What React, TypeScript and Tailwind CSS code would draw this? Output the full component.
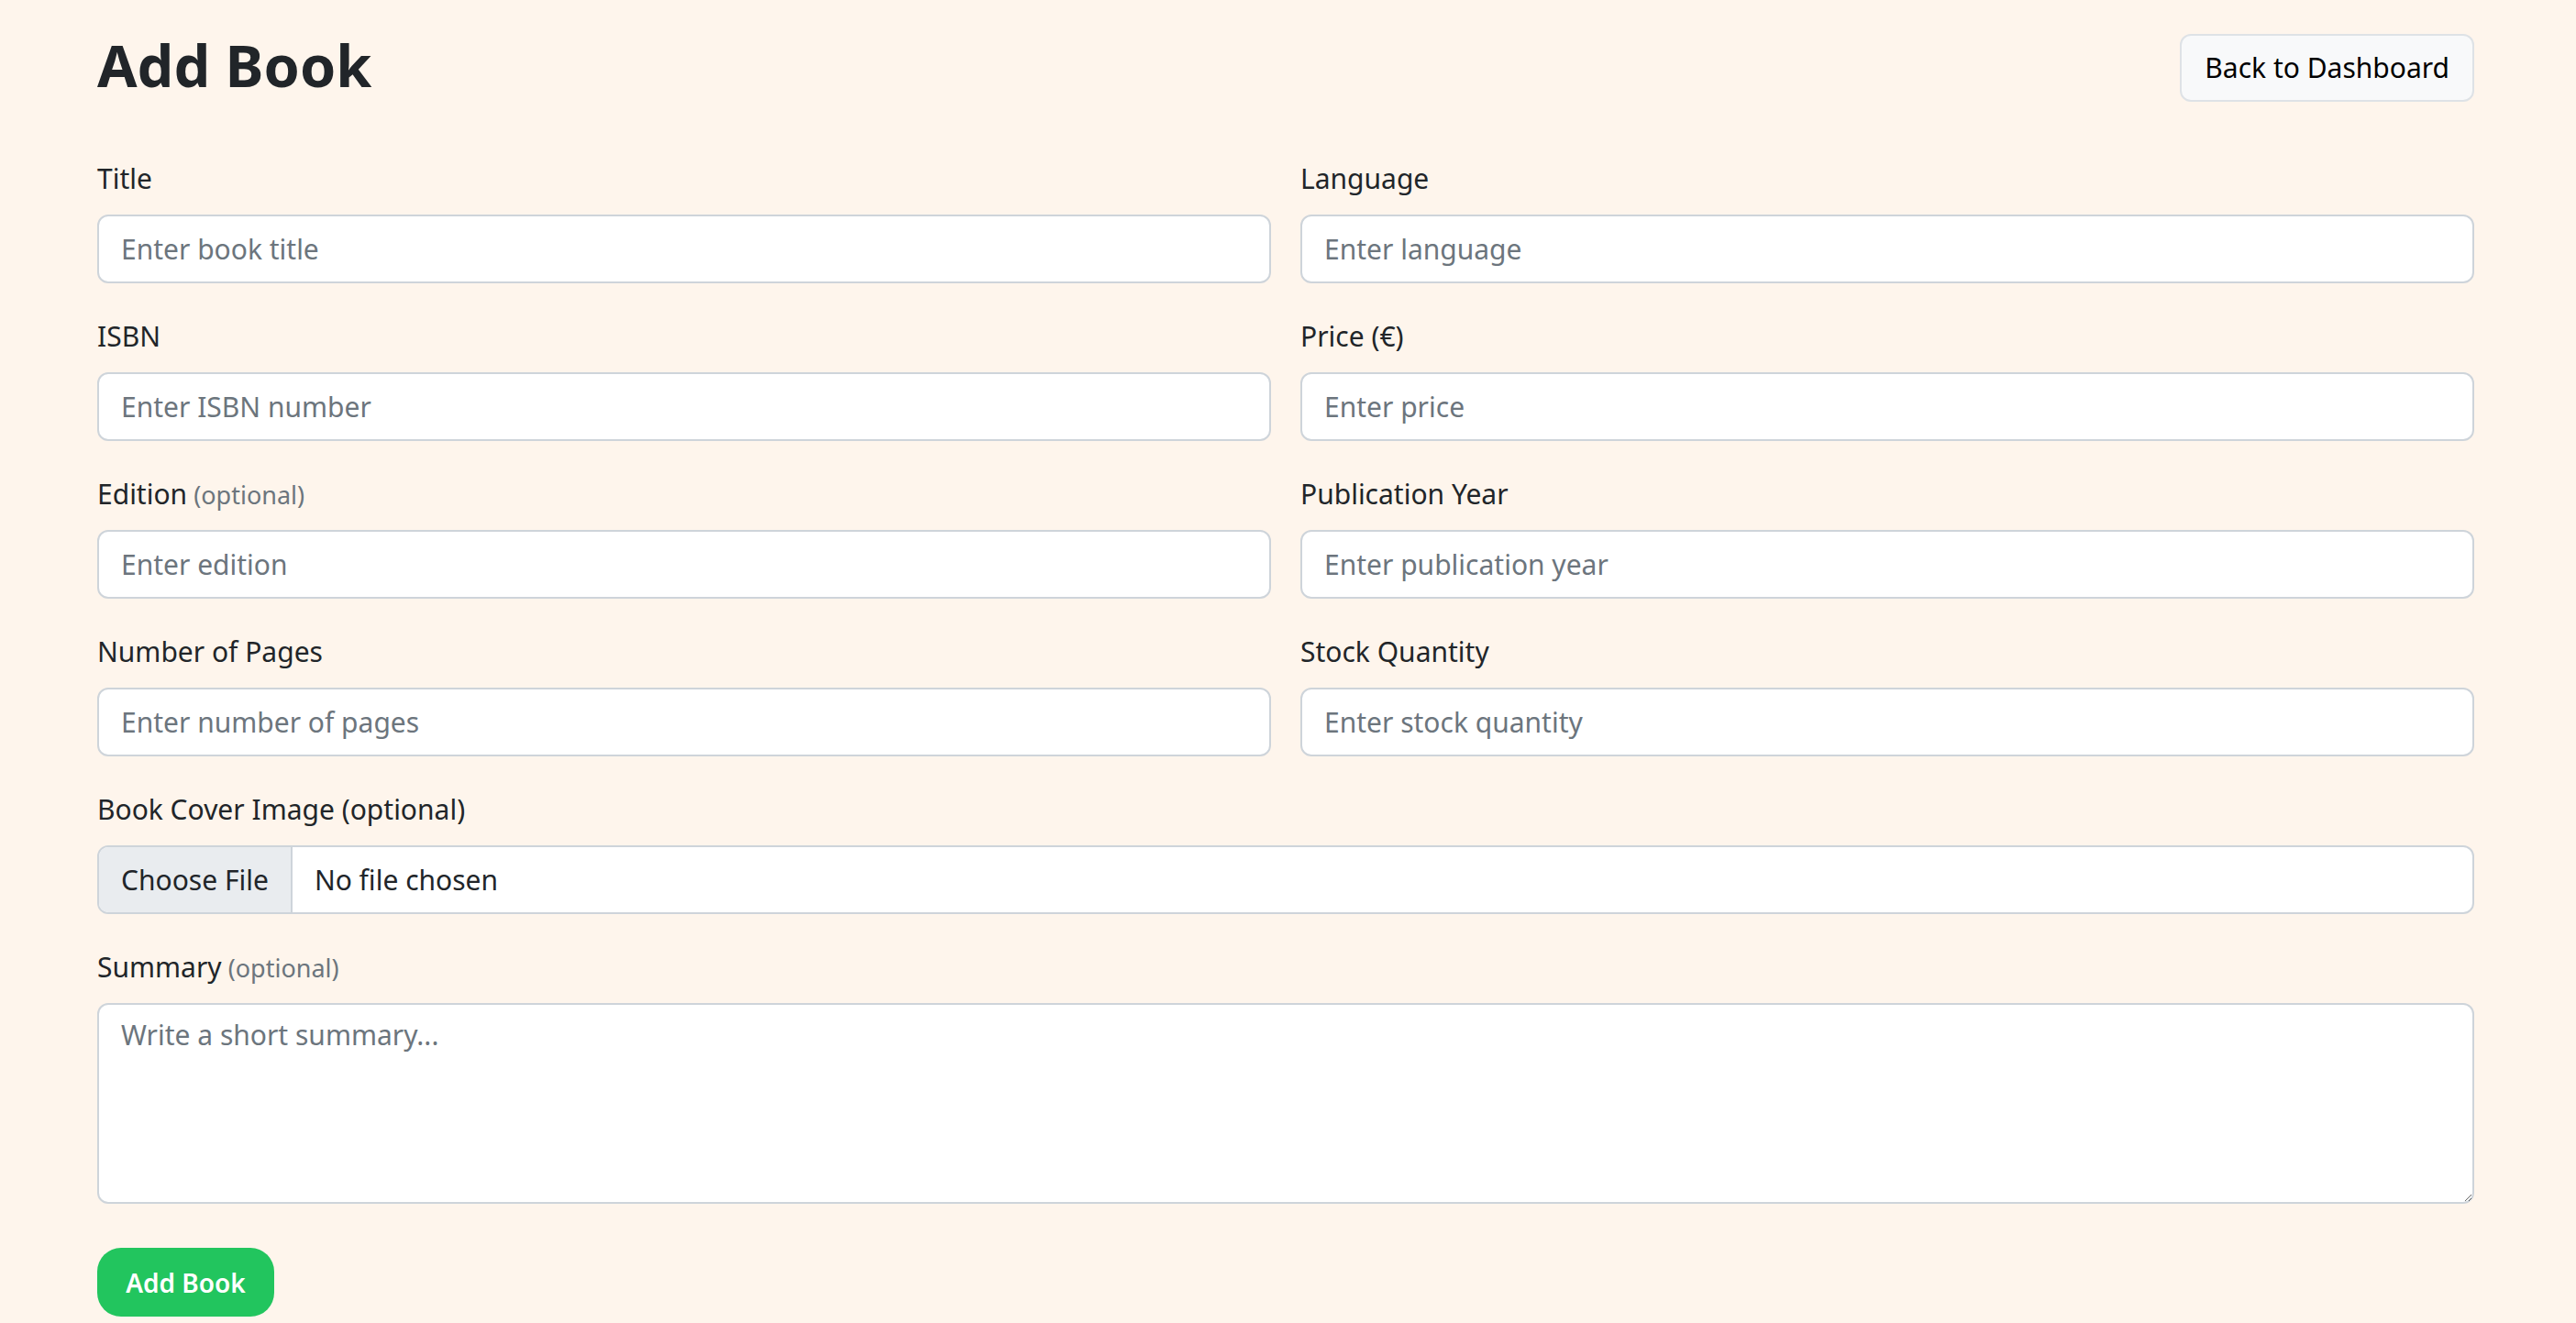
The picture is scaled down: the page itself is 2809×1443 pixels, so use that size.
import React from "react";

const font = { fontFamily: '"Noto Sans", "Open Sans", sans-serif' };

function Label({ children, optional }: { children: React.ReactNode; optional?: boolean }) {
  return (
    <label className="block h-[48px] text-[30px] leading-[48px] text-[#212529] mb-[15px] whitespace-nowrap">
      {children}
      {optional && <span className="text-[27px] leading-[48px] text-[#6c757d]"> (optional)</span>}
    </label>
  );
}

function Field({ label, optional, placeholder }: { label: string; optional?: boolean; placeholder: string }) {
  return (
    <div className="flex flex-col">
      <Label optional={optional}>{label}</Label>
      <input
        placeholder={placeholder}
        className="h-[75px] w-full rounded-[12px] border-2 border-[#ced4da] bg-white px-[24px] text-[30px] text-[#212529] placeholder:text-[#6c757d] outline-none"
        style={font}
      />
    </div>
  );
}

export default function App() {
  return (
    <div className="min-h-screen w-full overflow-hidden bg-[#fef5ec]" style={font}>
      <div className="w-[2592px] ml-[106px] pt-[35px]">
        <div className="flex items-center justify-between h-[77px]">
          <h2 className="text-[63px] font-bold leading-[77px] text-[#212529] mb-[6px]">Add Book</h2>
          <button className="h-[74px] rounded-[12px] border-2 border-[#dee2e6] bg-[#f8f9fa] px-[25px] text-[30px] text-[#000]">
            Back to Dashboard
          </button>
        </div>

        <div className="mt-[59px] grid grid-cols-2 gap-x-[32px] gap-y-[34px]">
          <Field label="Title" placeholder="Enter book title" />
          <Field label="Language" placeholder="Enter language" />
          <Field label="ISBN" placeholder="Enter ISBN number" />
          <Field label="Price (€)" placeholder="Enter price" />
          <Field label="Edition" optional placeholder="Enter edition" />
          <Field label="Publication Year" placeholder="Enter publication year" />
          <Field label="Number of Pages" placeholder="Enter number of pages" />
          <Field label="Stock Quantity" placeholder="Enter stock quantity" />

          <div className="col-span-2 flex flex-col">
            <Label>Book Cover Image (optional)</Label>
            <div className="flex h-[75px] w-full overflow-hidden rounded-[12px] border-2 border-[#ced4da] bg-white">
              <div className="flex h-full items-center border-r-2 border-[#ced4da] bg-[#e9ecef] px-[24px] text-[30px] text-[#212529]">
                Choose File
              </div>
              <div className="flex h-full items-center px-[24px] text-[30px] text-[#212529]">No file chosen</div>
            </div>
          </div>

          <div className="col-span-2 flex flex-col">
            <Label optional>Summary</Label>
            <textarea
              placeholder="Write a short summary..."
              className="block h-[219px] w-full rounded-[12px] border-2 border-[#ced4da] bg-white px-[24px] py-[10px] text-[30px] leading-[46px] text-[#212529] placeholder:text-[#6c757d] outline-none"
              style={font}
            />
          </div>
        </div>

        <button className="block mt-[48px] h-[75px] w-[193px] rounded-[26px] bg-[#22c55e] text-[28px] font-semibold text-white">
          Add Book
        </button>
      </div>
    </div>
  );
}
